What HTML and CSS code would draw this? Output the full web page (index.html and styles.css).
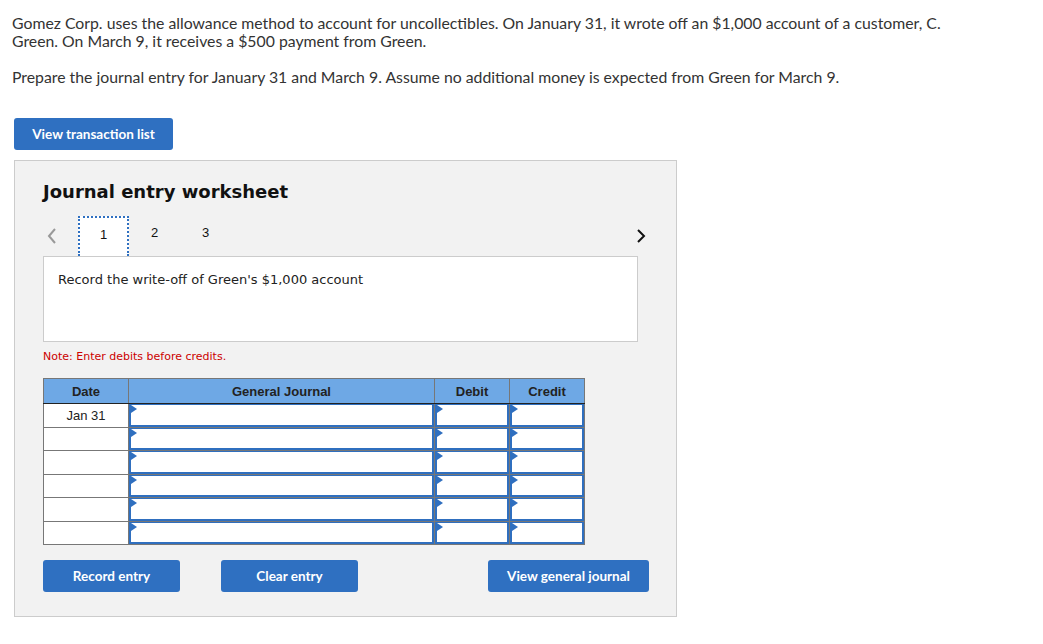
FILE: index.html
```html
<!DOCTYPE html>
<html lang="en">

<head>
    <meta charset="UTF-8">
    <title>Journal entry worksheet</title>
    <link rel="stylesheet" href="styles.css">
</head>

<body>
    <div class="question">
        <p>Gomez Corp. uses the allowance method to account for uncollectibles. On January 31, it wrote off an $1,000 account of a customer, C. Green. On March 9, it receives a $500 payment from Green.</p>
        <p>Prepare the journal entry for January 31 and March 9. Assume no additional money is expected from Green for March 9.</p>
    </div>

    <button type="button" class="btn btn-list">View transaction list</button>

    <div class="worksheet">
        <h2 class="ws-title">Journal entry worksheet</h2>

        <div class="ws-nav">
            <span class="nav-arrow prev">
                <svg width="10" height="16" viewBox="0 0 10 16"><path d="M8 1 L2 8 L8 15" fill="none" stroke="#999" stroke-width="2"/></svg>
            </span>
            <span class="tab active">1</span>
            <span class="tab">2</span>
            <span class="tab">3</span>
            <span class="nav-arrow next">
                <svg width="10" height="16" viewBox="0 0 10 16"><path d="M2 2 L8 8 L2 14" fill="none" stroke="#111" stroke-width="2"/></svg>
            </span>
        </div>

        <div class="ws-desc">Record the write-off of Green's $1,000 account</div>

        <p class="ws-note">Note: Enter debits before credits.</p>

        <table class="journal">
            <thead>
                <tr>
                    <th class="col-date">Date</th>
                    <th class="col-acct">General Journal</th>
                    <th class="col-num">Debit</th>
                    <th class="col-num">Credit</th>
                </tr>
            </thead>
            <tbody>
                <tr>
                    <td class="date">Jan 31</td>
                    <td><div class="field"></div></td>
                    <td><div class="field"></div></td>
                    <td><div class="field"></div></td>
                </tr>
                <tr>
                    <td class="date"></td>
                    <td><div class="field"></div></td>
                    <td><div class="field"></div></td>
                    <td><div class="field"></div></td>
                </tr>
                <tr>
                    <td class="date"></td>
                    <td><div class="field"></div></td>
                    <td><div class="field"></div></td>
                    <td><div class="field"></div></td>
                </tr>
                <tr>
                    <td class="date"></td>
                    <td><div class="field"></div></td>
                    <td><div class="field"></div></td>
                    <td><div class="field"></div></td>
                </tr>
                <tr>
                    <td class="date"></td>
                    <td><div class="field"></div></td>
                    <td><div class="field"></div></td>
                    <td><div class="field"></div></td>
                </tr>
                <tr>
                    <td class="date"></td>
                    <td><div class="field"></div></td>
                    <td><div class="field"></div></td>
                    <td><div class="field"></div></td>
                </tr>
            </tbody>
        </table>

        <div class="ws-actions">
            <button type="button" class="btn btn-record">Record entry</button>
            <button type="button" class="btn btn-clear">Clear entry</button>
            <button type="button" class="btn btn-journal">View general journal</button>
        </div>
    </div>
</body>

</html>
```

FILE: styles.css
```css
/* page */
body {
    font-family: Lato, 'Liberation Sans', sans-serif;
    color: #333;
    background-color: #fff;
    margin: 0;
    padding: 14px 12px;
}

.question p {
    font-size: 15.8px;
    line-height: 18px;
    margin: 0 0 18px;
    max-width: 945px;
}

/* buttons */
.btn {
    background-color: #2f70c1;
    color: #fff;
    border: none;
    border-radius: 3px;
    font-family: Lato, 'Liberation Sans', sans-serif;
    font-weight: bold;
    font-size: 13.5px;
    height: 32px;
    padding: 0;
    cursor: pointer;
}

.btn-list {
    width: 159px;
    margin: 32px 0 0 2px;
    display: block;
}

/* worksheet panel */
.worksheet {
    width: 633px;
    margin: 10px 0 0 2px;
    padding: 19px 0 24px 28px;
    background-color: #f2f2f2;
    border: 1px solid #ccc;
    font-family: Verdana, 'DejaVu Sans', sans-serif;
}

.ws-title {
    font-size: 18px;
    font-weight: bold;
    color: #111;
    margin: 0 0 12px;
    line-height: 24px;
}

.ws-nav {
    display: flex;
    align-items: center;
    height: 40px;
    width: 603px;
}

.nav-arrow {
    display: flex;
    align-items: center;
    width: 31px;
    padding-left: 4px;
}

.nav-arrow.next {
    margin-left: auto;
    width: auto;
}

.tab {
    width: 51px;
    height: 40px;
    line-height: 34px;
    text-align: center;
    font-family: 'Liberation Sans', Arial, sans-serif;
    font-size: 13px;
    color: #111;
    box-sizing: border-box;
}

.tab.active {
    background-color: #fff;
    border: 2px dotted #2f70c1;
    border-bottom: none;
}

.ws-desc {
    width: 579px;
    height: 55px;
    background-color: #fff;
    border: 1px solid #ccc;
    padding: 15px 0 14px 14px;
    font-size: 13px;
    color: #222;
}

.ws-note {
    color: #c00;
    font-size: 11px;
    margin: 8px 0 15px;
}

/* journal table */
.journal {
    border-collapse: collapse;
    width: 542px;
    border: 1px solid #777;
    font-family: 'Liberation Sans', Arial, sans-serif;
}

.journal th {
    background-color: #6ea8e5;
    color: #222;
    font-size: 13px;
    font-weight: bold;
    height: 24px;
    padding: 0;
    border: 1px solid #777;
    border-bottom: 1px solid #222;
}

.journal th + th {
    border-left: 1px solid #222;
}

.col-date {
    width: 84px;
}

.col-num {
    width: 74px;
}

.journal td {
    padding: 0;
    height: 22.5px;
    border: 1px solid #777;
    background-color: #fff;
}

.journal td.date {
    text-align: center;
    font-size: 13px;
    color: #222;
    vertical-align: top;
    padding-top: 4px;
    height: 18.5px;
}

.field {
    position: relative;
    height: 19.5px;
    border: 2px solid #2f6fbf;
    border-top-width: 1px;
    background-color: #fff;
}

.field::before {
    content: "";
    position: absolute;
    left: 0;
    top: 0;
    border-left: 6px solid #2f6fbf;
    border-top: 4px solid transparent;
    border-bottom: 4px solid transparent;
}

/* action buttons */
.ws-actions {
    display: flex;
    margin-top: 15px;
    width: 606px;
}

.btn-record {
    width: 137px;
}

.btn-clear {
    width: 137px;
    margin-left: 41px;
}

.btn-journal {
    width: 161px;
    margin-left: auto;
}
```
